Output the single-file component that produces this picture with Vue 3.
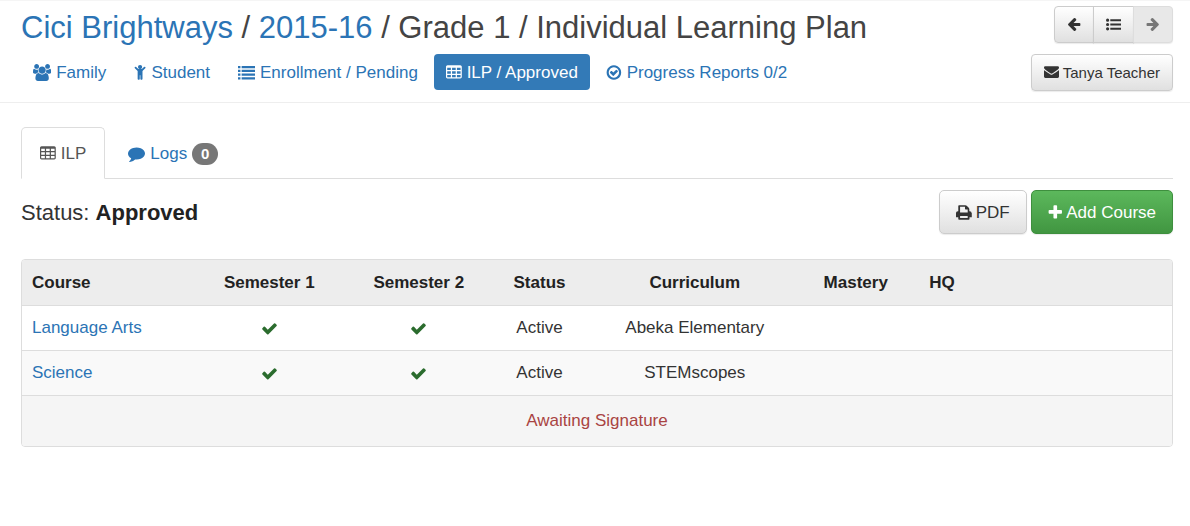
<script setup>
import { h } from 'vue'

const shapes = {
  users: [1920, 'M593 896q-162 5-265 128h-134q-82 0-138-40.5t-56-118.5q0-353 124-353 6 0 43.5 21t97.5 42.5 119 21.5q67 0 133-23-5 37-5 66 0 139 81 256zm1071 637q0 120-73 189.5t-194 69.5h-874q-121 0-194-69.5t-73-189.5q0-53 3.5-103.5t14-109 26.5-108.5 43-97.5 62-81 85.5-53.5 111.5-20q10 0 43 21.5t73 48 107 48 135 21.5 135-21.5 107-48 73-48 43-21.5q61 0 111.5 20t85.5 53.5 62 81 43 97.5 26.5 108.5 14 109 3.5 103.5zm-1024-1277q0 106-75 181t-181 75-181-75-75-181 75-181 181-75 181 75 75 181zm704 384q0 159-112.5 271.5t-271.5 112.5-271.5-112.5-112.5-271.5 112.5-271.5 271.5-112.5 271.5 112.5 112.5 271.5zm576 225q0 78-56 118.5t-138 40.5h-134q-103-123-265-128 81-117 81-256 0-29-5-66 66 23 133 23 59 0 119-21.5t97.5-42.5 43.5-21q124 0 124 353zm-128-609q0 106-75 181t-181 75-181-75-75-181 75-181 181-75 181 75 75 181z'],
  child: [1280, 'M1188 308q28 28 28 68t-28 68l-292 292v824q0 46-33 79t-79 33-79-33-33-79v-384h-64v384q0 46-33 79t-79 33-79-33-33-79v-824l-292-292q-28-28-28-68t28-68 68-28 68 28l228 228h368l228-228q28-28 68-28t68 28zM864 320a224 224 0 1 1-448 0a224 224 0 1 1 448 0z'],
  list: [1792, 'M0 200h256v240H0zM384 200h1408v240H384zM0 600h256v240H0zM384 600h1408v240H384zM0 1000h256v240H0zM384 1000h1408v240H384zM0 1400h256v240H0zM384 1400h1408v240H384z'],
  listUl: [1792, 'M384 1408a192 192 0 1 1-384 0a192 192 0 1 1 384 0zM384 896a192 192 0 1 1-384 0a192 192 0 1 1 384 0zM384 384a192 192 0 1 1-384 0a192 192 0 1 1 384 0zM512 272h1280v224H512zM512 784h1280v224H512zM512 1296h1280v224H512z'],
  table: [1664, 'M160 128h1344q66 0 113 47t47 113v1088q0 66-47 113t-113 47H160q-66 0-113-47T0 1376V288q0-66 47-113t113-47zM128 384v256h384V384zM640 384v256h384V384zM1152 384v256h384V384zM128 768v256h384V768zM640 768v256h384V768zM1152 768v256h384V768zM128 1152v224q0 32 32 32h352v-256zM640 1152v256h384v-256zM1152 1152v256h352q32 0 32-32v-224z'],
  checkCircle: [1664, 'M1235 813l-422 422q-19 19-45 19t-45-19l-294-294q-19-19-19-45t19-45l102-102q19-19 45-19t45 19l147 147 275-275q19-19 45-19t45 19l102 102q19 19 19 45t-19 45zm141 83q0-148-73-273t-198-198-273-73-273 73-198 198-73 273 73 273 198 198 273 73 273-73 198-198 73-273zm224 0q0 209-103 385.5t-279.5 279.5-385.5 103-385.5-103-279.5-279.5-103-385.5 103-385.5 279.5-279.5 385.5-103 385.5 103 279.5 279.5 103 385.5z'],
  arrowLeft: [1664, 'M1600 832v128q0 53-32.5 90.5t-84.5 37.5h-704l293 294q38 36 38 90t-38 90l-75 76q-37 37-90 37-52 0-91-37l-651-652q-37-37-37-90 0-52 37-91l651-650q38-38 91-38 52 0 90 38l75 74q38 38 38 91t-38 91l-293 293h704q52 0 84.5 37.5t32.5 90.5z'],
  arrowRight: [1664, 'M64 832v128q0 53 32.5 90.5t84.5 37.5h704l-293 294q-38 36-38 90t38 90l75 76q37 37 90 37 52 0 91-37l651-652q37-37 37-90 0-52-37-91l-651-650q-38-38-91-38-52 0-90 38l-75 74q-38 38-38 91t38 91l293 293h-704q-52 0-84.5 37.5t-32.5 90.5z'],
  envelope: [1792, 'M1792 710v794q0 66-47 113t-113 47h-1472q-66 0-113-47t-47-113v-794q44 49 101 87 362 246 497 345 57 42 92.5 65.5t94.5 48 110 24.5h2q51 0 110-24.5t94.5-48 92.5-65.5q170-123 498-345 57-39 100-87zm0-294q0 79-49 151t-122 123q-376 261-468 325-10 7-42.5 31t-54 38.5-52 32.5-57.5 27-50 9h-2q-23 0-50-9t-57.5-27-52-32.5-54-38.5-42.5-31q-91-64-262-182.5t-205-142.5q-62-42-117-115.5t-55-136.5q0-78 41.5-130t118.5-52h1472q65 0 112.5 47t47.5 113z'],
  comment: [1792, 'M1792 896q0 174-120 321.5t-326 233-450 85.5q-70 0-145-8-198 175-460 242-49 14-114 22-17 2-30.5-9t-17.5-29v-1q-3-4-.5-12t2-10 4.5-9.5l6-9 7-8.5 8-9q7-8 31-34.5t34.5-38 31-39.5 32.5-51 27-59 26-76q-157-89-247.5-220t-90.5-281q0-130 71-248.5t191-204.5 286-136.5 348-50.5q244 0 450 85.5t326 233 120 321.5z'],
  print: [1664, 'M430 1480h804v-220h-804zM430 900h804v-330h-190q-48 0-72-24t-24-72v-190h-518zM1664 960v416q0 32-32 32h-208v176q0 80-80 80H320q-80 0-80-80v-176H32q-32 0-32-32v-416q0-192 192-192h48V208q0-80 80-80h660q90 0 150 60l214 214q60 60 60 150v216h48q192 0 192 192z'],
  plus: [1536, 'M1472 736v192q0 40-28 68t-68 28h-416v416q0 40-28 68t-68 28h-192q-40 0-68-28t-28-68v-416h-416q-40 0-68-28t-28-68v-192q0-40 28-68t68-28h416v-416q0-40 28-68t68-28h192q40 0 68 28t28 68v416h416q40 0 68 28t28 68z'],
  check: [1792, 'M1671 566q0 40-28 68l-724 724-136 136q-28 28-68 28t-68-28l-136-136-362-362q-28-28-28-68t28-68l136-136q28-28 68-28t68 28l294 295 656-657q28-28 68-28t68 28l136 136q28 28 28 68z'],
}

// These outlines cut their holes by the even-odd rule; the rest have overlapping solid parts.
const cutouts = ['table', 'print']

const Icon = ({ name }) =>
  h('svg', { viewBox: `0 0 ${shapes[name][0]} 1792`, 'aria-hidden': 'true' }, [
    h('path', {
      d: shapes[name][1],
      fill: 'currentColor',
      'fill-rule': cutouts.includes(name) ? 'evenodd' : 'nonzero',
    }),
  ])
Icon.props = ['name']

const sections = [
  { icon: 'users', text: 'Family' },
  { icon: 'child', text: 'Student' },
  { icon: 'list', text: 'Enrollment / Pending' },
  { icon: 'table', text: 'ILP / Approved', active: true },
  { icon: 'checkCircle', text: 'Progress Reports 0/2' },
]

const columns = [
  { key: 'course', label: 'Course' },
  { key: 'term', label: 'Semester 1' },
  { key: 'term', label: 'Semester 2' },
  { key: 'status', label: 'Status' },
  { key: 'curriculum', label: 'Curriculum' },
  { key: 'mastery', label: 'Mastery' },
  { key: 'hq', label: 'HQ' },
  { key: 'rest', label: '' },
]

const courses = [
  { name: 'Language Arts', status: 'Active', curriculum: 'Abeka Elementary' },
  { name: 'Science', status: 'Active', curriculum: 'STEMscopes' },
]
</script>

<template>
  <div class="page">
    <header class="top">
      <div class="heading">
        <h1><a href="#">Cici Brightways</a> / <a href="#">2015-16</a> / Grade 1 / Individual Learning Plan</h1>
        <nav class="pills">
          <a v-for="s in sections" :key="s.text" href="#" class="pill" :class="{ active: s.active }">
            <Icon :name="s.icon" class="icon" />{{ s.text }}
          </a>
        </nav>
      </div>
      <div class="tools">
        <div class="group">
          <button type="button" class="btn small" aria-label="Previous"><Icon name="arrowLeft" class="icon" /></button>
          <button type="button" class="btn small" aria-label="List"><Icon name="listUl" class="icon" /></button>
          <button type="button" class="btn small" aria-label="Next" disabled><Icon name="arrowRight" class="icon" /></button>
        </div>
        <button type="button" class="btn small"><Icon name="envelope" class="icon" />Tanya Teacher</button>
      </div>
    </header>

    <main class="body">
      <nav class="tabs">
        <a href="#" class="tab current"><Icon name="table" class="icon" />ILP</a>
        <a href="#" class="tab"><Icon name="comment" class="icon" />Logs <span class="badge">0</span></a>
      </nav>

      <div class="bar">
        <p class="state">Status: <strong>Approved</strong></p>
        <div class="actions">
          <button type="button" class="btn"><Icon name="print" class="icon" />PDF</button>
          <button type="button" class="btn add"><Icon name="plus" class="icon" />Add Course</button>
        </div>
      </div>

      <div class="panel">
        <table>
          <colgroup>
            <col v-for="(c, i) in columns" :key="i" :class="c.key" />
          </colgroup>
          <thead>
            <tr>
              <th v-for="(c, i) in columns" :key="i" scope="col">{{ c.label }}</th>
            </tr>
          </thead>
          <tbody>
            <tr v-for="c in courses" :key="c.name">
              <td><a href="#">{{ c.name }}</a></td>
              <td><Icon name="check" class="icon tick" /></td>
              <td><Icon name="check" class="icon tick" /></td>
              <td>{{ c.status }}</td>
              <td>{{ c.curriculum }}</td>
              <td></td>
              <td></td>
              <td></td>
            </tr>
          </tbody>
          <tfoot>
            <tr>
              <td colspan="8">Awaiting Signature</td>
            </tr>
          </tfoot>
        </table>
      </div>
    </main>
  </div>
</template>

<style>
body {
  background: #fff;
}
</style>

<style scoped>
.page {
  font-family: "Liberation Sans", Arial, sans-serif;
  font-size: 17px;
  line-height: 24px;
  color: #333;
  border-top: 1px solid #f5f5f5;
}
a {
  color: #2b74b5;
  text-decoration: none;
}
.icon {
  height: 1em;
  flex: none;
  display: block;
  margin-bottom: 2px;
}
.top {
  display: flex;
  justify-content: space-between;
  padding: 5px 17px 11px 21px;
  border-bottom: 1px solid #eee;
}
h1 {
  margin: 0 0 4px;
  font-size: 31px;
  line-height: 44px;
  font-weight: 500;
  color: #444;
}
.pills {
  display: flex;
  gap: 4px;
}
.pill {
  display: flex;
  align-items: center;
  gap: 5px;
  padding: 7px 12px 5px;
  border-radius: 4px;
  white-space: nowrap;
}
.pill.active {
  background: #337ab7;
  color: #fff;
}
.tools {
  display: flex;
  flex-direction: column;
  align-items: flex-end;
  gap: 11px;
}
.group {
  display: flex;
}
.btn {
  display: flex;
  align-items: center;
  gap: 4px;
  margin: 0;
  padding: 11px 16px 9px;
  font: inherit;
  line-height: 22px;
  color: #333;
  border: 1px solid #ccc;
  border-radius: 5px;
  background: linear-gradient(#fff, #e0e0e0);
  box-shadow: 0 1px 1px rgba(0, 0, 0, 0.08);
}
.btn.small {
  min-height: 37px;
  padding: 6px 12px;
  font-size: 15px;
  border-radius: 4px;
}
.group .icon {
  margin-bottom: 0;
}
.group .btn + .btn {
  margin-left: -1px;
  border-top-left-radius: 0;
  border-bottom-left-radius: 0;
}
.group .btn:not(:last-child) {
  border-top-right-radius: 0;
  border-bottom-right-radius: 0;
}
.btn:disabled {
  background: #e8e8e8;
  color: #777;
  border-color: #ddd;
}
.btn.add {
  color: #fff;
  border-color: #3e8f3e;
  background: linear-gradient(#5cb85c, #419641);
}
.body {
  padding: 24px 17px 0 21px;
}
.tabs {
  display: flex;
  border-bottom: 1px solid #ddd;
}
.tab {
  display: flex;
  align-items: center;
  gap: 5px;
  padding: 14px 18px 12px;
  margin-bottom: -1px;
  border: 1px solid transparent;
  border-bottom-color: #ddd;
  border-radius: 5px 5px 0 0;
}
.tab + .tab {
  margin-left: 4px;
}
.tab.current {
  color: #555;
  border-color: #ddd;
  border-bottom-color: #fff;
  background: #fff;
}
.badge {
  min-width: 10px;
  padding: 0 8px;
  border-radius: 11px;
  background: #777;
  color: #fff;
  font-size: 15px;
  font-weight: bold;
  line-height: 22px;
  text-align: center;
}
.bar {
  display: flex;
  justify-content: space-between;
  align-items: center;
  padding: 11px 0 25px;
}
.state {
  margin: 0;
  padding-top: 2px;
  font-size: 22px;
}
.state strong {
  color: #222;
}
.actions {
  display: flex;
  gap: 4px;
}
.panel {
  border: 1px solid #ddd;
  border-radius: 4px;
  overflow: hidden;
}
table {
  width: 100%;
  table-layout: fixed;
  border-collapse: separate;
  border-spacing: 0;
}
col.course { width: 15%; }
col.term { width: 13%; }
col.status { width: 8%; }
col.curriculum { width: 19%; }
col.mastery { width: 9%; }
col.hq { width: 6%; }
th,
td {
  padding: 10px;
  text-align: center;
  border-bottom: 1px solid #ddd;
}
th:first-child,
tbody td:first-child {
  text-align: left;
}
th {
  padding-top: 11px;
  color: #222;
  background: #ededed;
}
tbody tr:nth-child(even) td {
  background: #f9f9f9;
}
.tick {
  margin: 0 auto;
  color: #2b6c2e;
}
tfoot td {
  padding: 13px 10px;
  border-bottom: 0;
  background: #f5f5f5;
  color: #a94442;
}
</style>
